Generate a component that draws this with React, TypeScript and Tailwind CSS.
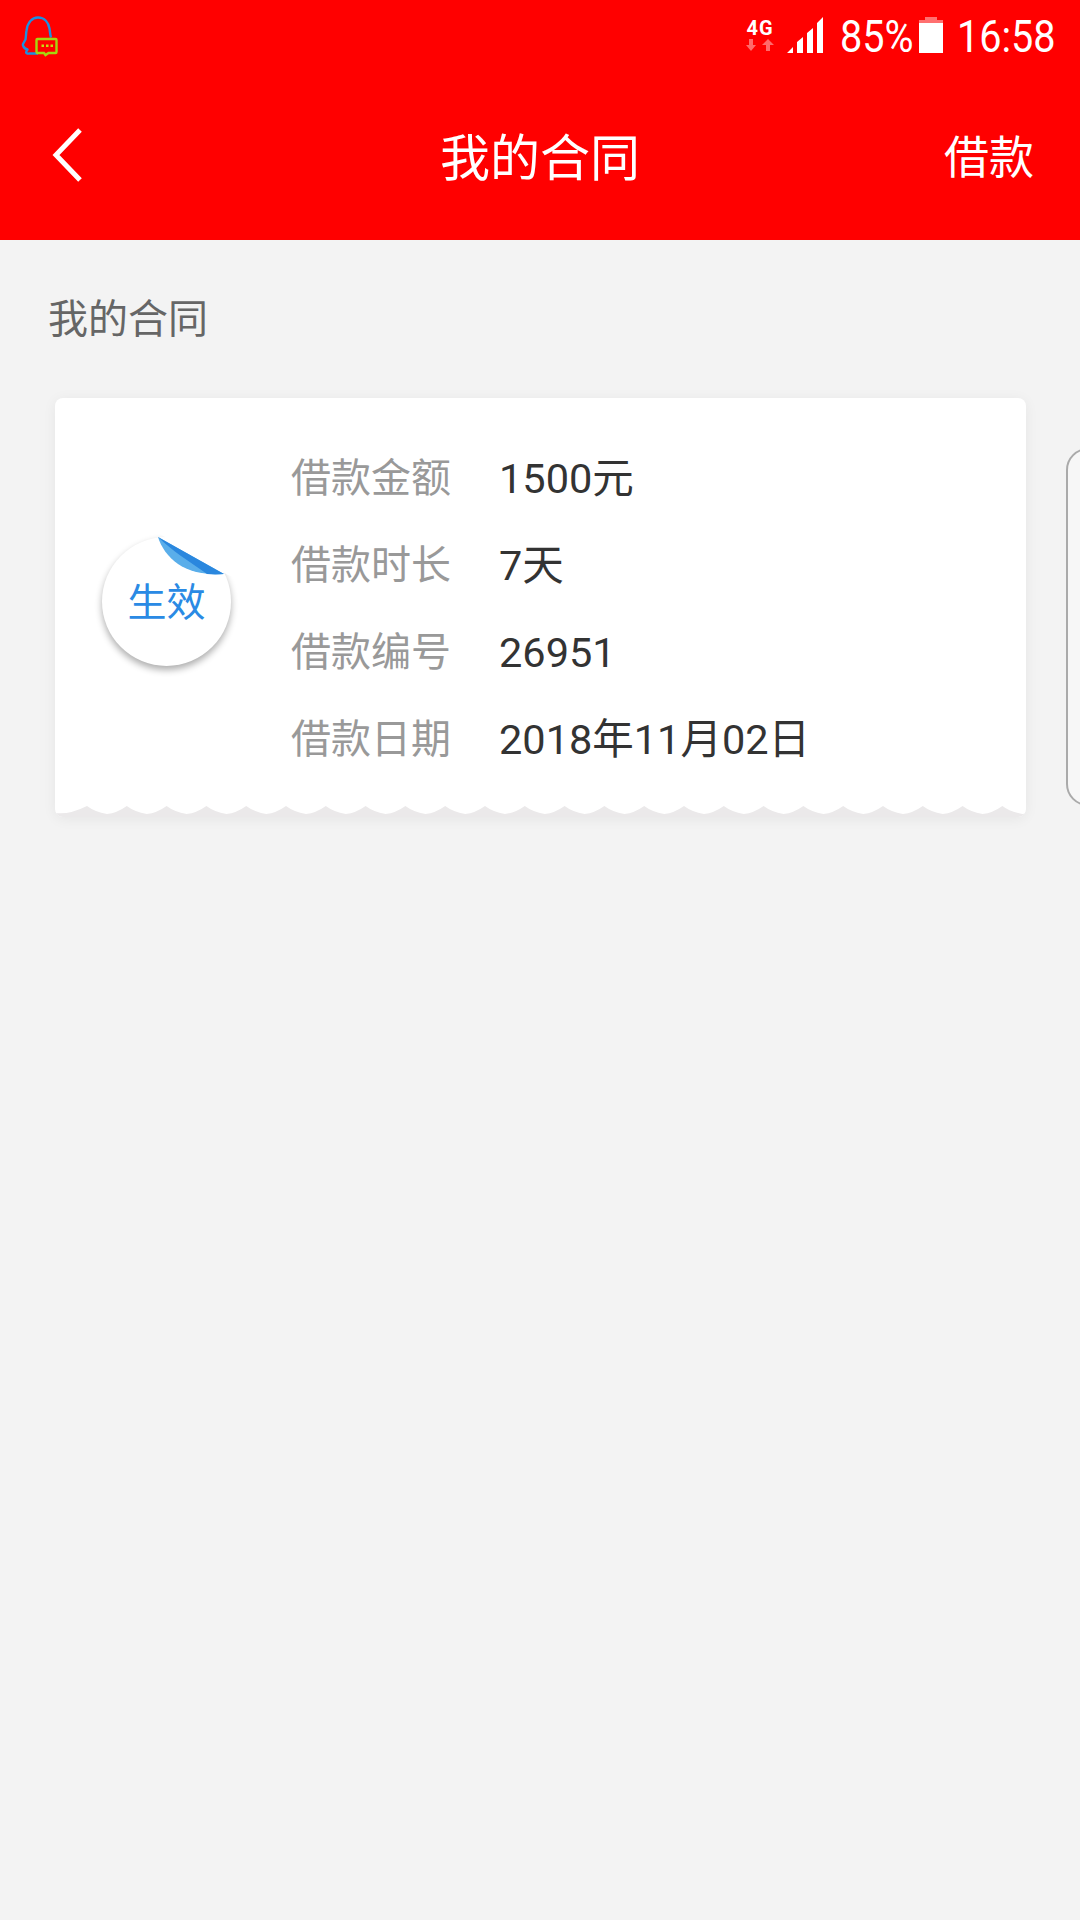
import React from "react";

const font = { fontFamily: '"Roboto", "Noto Sans CJK SC", sans-serif' };

const rows = [
  { label: "借款金额", value: "1500元" },
  { label: "借款时长", value: "7天" },
  { label: "借款编号", value: "26951" },
  { label: "借款日期", value: "2018年11月02日" },
];

const QQIcon = () => (
  <svg width="60" height="60" viewBox="0 0 60 60" fill="none" className="mb-[8px]">
    <path
      d="M38 52.500H30c-3 .5-4.500-.5-3.500-2.500l1-1.500c-2-.5-3.500-1.500-4-3-.5-1-1-1.500-.5-2.500l2.500-4.500c.5-3 .5-6 1-9 1-8 5.500-13 11.500-13 6.500 0 10.500 5 11.500 11 .5 3 .5 6 1.500 9"
      stroke="#1e8fe0"
      strokeWidth="2.4"
      strokeLinejoin="round"
    />
    <path
      d="M38.500 38h17a1 1 0 0 1 1 1v12a1 1 0 0 1-1 1h-7l-3 2-1.500-2h-6.500a1 1 0 0 1-1-1V39a1 1 0 0 1 1-1z"
      stroke="#a5d610"
      strokeWidth="2.4"
      fill="#ff0000"
    />
    <rect x="41.500" y="43.500" width="2.500" height="2.500" fill="#c8d810" />
    <rect x="46" y="43.500" width="2.500" height="2.500" fill="#c8d810" />
    <rect x="50.500" y="43.500" width="2.500" height="2.500" fill="#c8d810" />
  </svg>
);

const StatusRight = () => (
  <div className="flex items-center text-white">
    <div className="flex flex-col items-center w-[30px]">
      <span className="text-[20px] leading-[20px] font-bold tracking-[1px]">4G</span>
      <svg width="28" height="13" viewBox="0 0 28 13" fill="#ff6a6a" className="mt-[1px]">
        <path d="M3 0h4v6h3l-5 6-5-6h3zM20 12h4V6h4l-6-6-6 6h4z" />
      </svg>
    </div>
    <svg width="37" height="36" viewBox="0 0 37 36" fill="#fff" className="ml-[12px] mb-[1px]">
      <path d="M0 36l6-6v6zM10 36V25l6-5v16zM20 36V16l6-5v25zM30 36V6l6-6v36z" />
    </svg>
    <span className="ml-[16px] w-[73px] mt-[3px] text-[44px] leading-[50px] origin-left scale-x-[0.9] whitespace-nowrap">
      85%
    </span>
    <div className="ml-[6px] w-[24px] h-[36px] flex flex-col">
      <div className="mx-[6px] h-[3px] bg-[#ff7070]" />
      <div className="h-[3px] bg-[#ff7070]" />
      <div className="flex-1 bg-white" />
    </div>
    <span className="ml-[14px] w-[100px] mt-[3px] text-[44px] leading-[50px] origin-left scale-x-[0.9] whitespace-nowrap">
      16:58
    </span>
  </div>
);

const Sticker = () => (
  <div className="relative w-[129px] h-[129px] rounded-full bg-white shadow-[0_4px_7px_rgba(0,0,0,0.32)] flex items-center justify-center">
    <span className="text-[39px] leading-none text-[#2a8ae4] mt-[4px]">生效</span>
    <svg
      width="90"
      height="60"
      viewBox="0 0 90 60"
      className="absolute left-[50px] top-[-6px]"
    >
      <path d="M6 2H90V50L76 44z" fill="#fff" />
      <path d="M6 6L72 43C52 44 38 41 26 33 16 26 9 16 6 6z" fill="#5aaeea" />
      <path d="M6 6L72 43C66 43.500 60 43.500 55 43 37 30 20 20 6 6z" fill="#2a87de" />
    </svg>
  </div>
);

// scalloped bottom edge of the card
const peaks = Array.from({ length: 24 }, (_, i) => 32 + i * 39.8);
const Scallops = () => {
  let d = "M0 12V8Q14 10 32 1";
  peaks.forEach((p) => {
    d += `Q${p + 8} 7 ${p + 20} 9Q${p + 30} 8 ${p + 39.800} 1`;
  });
  d += "V12z";
  return (
    <svg width="971" height="12" viewBox="0 0 971 12" className="absolute left-0 bottom-0">
      <path d={d} fill="#ebe9ea" />
    </svg>
  );
};

export default function App() {
  return (
    <div className="w-[1080px] h-[1920px] bg-[#f3f3f3] overflow-hidden" style={font}>
      <header className="h-[240px] bg-[#ff0000] text-white flex flex-col">
        <div className="h-[70px] flex items-center justify-between pr-[23px]">
          <QQIcon />
          <StatusRight />
        </div>
        <nav className="flex-1 grid grid-cols-[1fr_auto_1fr] items-center px-[52px]">
          <svg width="30" height="54" viewBox="0 0 30 54" fill="none">
            <path d="M28 2L4 27L28 52" stroke="#fff" strokeWidth="5" />
          </svg>
          <h1 className="text-[50px] leading-none font-normal mt-[8px]">我的合同</h1>
          <span className="text-[45px] leading-none text-right mt-[6px] mr-[-6px]">借款</span>
        </nav>
      </header>

      <h2 className="pl-[48px] pt-[56px] text-[40px] leading-[48px] text-[#666]">我的合同</h2>

      <div className="flex items-start gap-[40px] pl-[55px] mt-[54px]">
        <div className="relative w-[971px] h-[419px] shrink-0 rounded-[8px] bg-white shadow-[0_2px_14px_rgba(0,0,0,0.06)] flex items-center pl-[47px] overflow-hidden">
          <div className="mb-[13px]">
            <Sticker />
          </div>
          <div className="ml-[60px] flex flex-col gap-[39px] mt-[3px]">
            {rows.map((row) => (
              <div key={row.label} className="flex items-center h-[48px]">
                <span className="w-[208px] text-[40px] leading-none text-[#999]">{row.label}</span>
                <span className="text-[41.500px] leading-none text-[#333]">{row.value}</span>
              </div>
            ))}
          </div>
          <Scallops />
        </div>
        <div className="mt-[50px] w-[400px] h-[358px] shrink-0 rounded-[22px] border-2 border-[#aaaaaa] bg-[#f7f7f7]" />
      </div>
    </div>
  );
}
